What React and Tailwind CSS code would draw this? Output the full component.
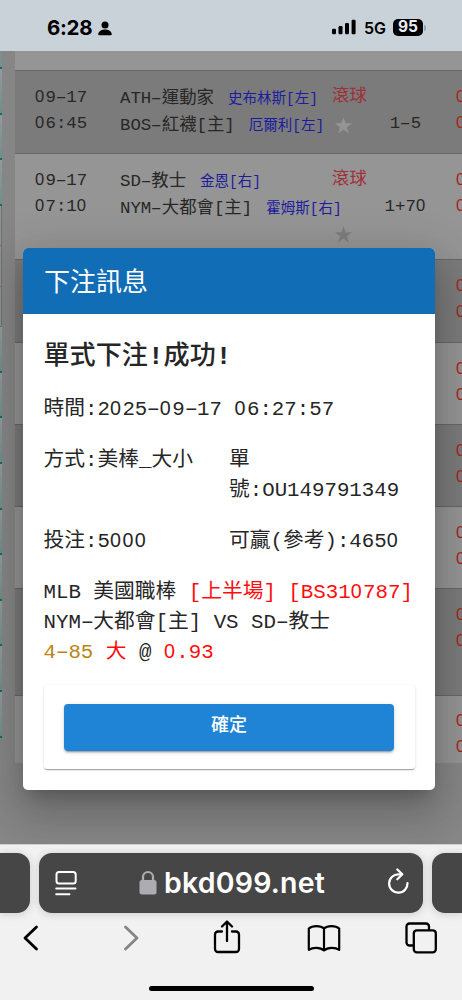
import React from 'react';
import clsx from 'clsx';

const ROWS = [
  {
    date: '09-17', time: '06:45', height: 'h-[83px]', shade: 'bg-[#7b7b7b]', star: 'mt-[7px] text-[#959595]',
    away: 'ATH-運動家', awayPitcher: '史布林斯[左]', home: 'BOS-紅襪[主]', homePitcher: '厄爾利[左]', line: '1-5',
  },
  {
    date: '09-17', time: '07:10', height: 'h-[106px]', shade: 'bg-[#959595]', star: 'mt-[33px] text-[#7d7d7d]',
    away: 'SD-教士', awayPitcher: '金恩[右]', home: 'NYM-大都會[主]', homePitcher: '霍姆斯[右]', line: '1+70',
  },
  { height: 'h-[83px]', shade: 'bg-[#7b7b7b]' },
  { height: 'h-[82px]', shade: 'bg-[#959595]' },
  { height: 'h-[82px]', shade: 'bg-[#7b7b7b]' },
  { height: 'h-[82px]', shade: 'bg-[#959595]' },
  { height: 'h-[107px]', shade: 'bg-[#7b7b7b]' },
];

// Plain zeros and wide dashes for the monospace face
const Mono = ({ children }) =>
  String(children).split(/([0-])/).map((part, i) => {
    if (part === '0') {
      return <span key={i} className="font-['Liberation_Sans'] text-[0.95em] leading-[0] tracking-[0.076em]">0</span>;
    }
    if (part === '-') {
      return <span key={i} className="inline-block scale-x-[1.7] leading-[0]">-</span>;
    }
    return part;
  });

const Star = ({ className }) => (
  <svg viewBox="0 0 24 24" className={clsx('ml-[2px] size-[19px]', className)} fill="currentColor">
    <path d="M12 1.5l2.7 7.7h8.1l-6.5 4.9 2.4 7.9-6.7-4.8L5.3 22l2.4-7.9L1.2 9.2h8.1z" />
  </svg>
);

const Odds = () => (
  <div className="ml-auto w-[6px] overflow-hidden pt-px text-[#a8261a]">
    <div><Mono>0</Mono></div>
    <div><Mono>0</Mono></div>
  </div>
);

const GameRow = ({ row }) => (
  <div className={clsx('flex shrink-0 border-b border-[#676767] pt-[12.5px] leading-[26.4px]', row.height, row.shade)}>
    {row.date && (
      <>
        <div className="ml-5 w-[85px] shrink-0 pt-px">
          <div><Mono>{row.date}</Mono></div>
          <div><Mono>{row.time}</Mono></div>
        </div>
        <div className="w-[212px] shrink-0 pt-px leading-[27.4px] whitespace-nowrap">
          <div>
            <Mono>{row.away}</Mono>
            <span className="ml-[14px] text-[14.5px] leading-[0] text-[#1c1c9c]">{row.awayPitcher}</span>
          </div>
          <div>
            <Mono>{row.home}</Mono>
            <span className="ml-[14px] text-[14.5px] leading-[0] text-[#1c1c9c]">{row.homePitcher}</span>
          </div>
        </div>
        <div className="w-[37px] shrink-0 pt-[1.5px]">
          <div className="h-[24px] leading-[24px] text-[#9f3038]">滾球</div>
          <Star className={row.star} />
        </div>
        <div className="w-[73px] shrink-0 pt-[27px] text-center"><Mono>{row.line}</Mono></div>
      </>
    )}
    <Odds />
  </div>
);

const SideStrip = () => (
  <div className="flex w-[2px] shrink-0 flex-col">
    <div className="h-[18px] shrink-0 border-b-2 border-[#146a6a] bg-[#789090]" />
    {[1, 2, 3].map(i => (
      <div key={i} className="h-[45.6px] shrink-0 border-b-2 border-[#146a6a] bg-gradient-to-b from-[#929a9a] to-[#6d9088]" />
    ))}
    {[1, 2, 3].map(i => (
      <div key={i} className="h-[40.5px] shrink-0 border-r border-b border-[#687474] bg-[#929292]" />
    ))}
    {[1, 2, 3, 4, 5, 6, 7, 8, 9].map(i => (
      <div key={i} className="h-[45.6px] shrink-0 border-b-2 border-[#146a6a] bg-gradient-to-b from-[#929a9a] to-[#6d9088]" />
    ))}
  </div>
);

const StatusBar = () => (
  <div className="flex h-[51px] shrink-0 items-center bg-[#c9d1d9] pt-[5px] pl-[47px] text-black">
    <span className="w-[45px] font-[Inter] text-[20.5px] font-bold tracking-[-0.3px]">6:28</span>
    <svg viewBox="0 0 14 15" className="ml-[6px] h-[15px] w-[14px]" fill="currentColor">
      <circle cx="7" cy="4" r="3.5" />
      <path d="M.2 13c.6-3 3-4.6 6.8-4.6s6.200 1.600 6.800 4.600c.1.700-.300 1.200-1 1.200H1.200c-.700 0-1.100-.500-1-1.200z" />
    </svg>
    <svg viewBox="0 0 24 16" className="ml-[220px] h-[16px] w-[24px] -translate-y-px" fill="currentColor">
      <rect x="0" y="9.800" width="4" height="5.500" rx="1.200" />
      <rect x="6.500" y="7" width="4" height="8.300" rx="1.200" />
      <rect x="13" y="4" width="4" height="11.300" rx="1.200" />
      <rect x="19.600" y="0.800" width="4" height="14.500" rx="1.200" />
    </svg>
    <span className="ml-[8px] w-[22px] font-[Inter] text-[16px] font-semibold">5G</span>
    <span className="ml-[7px] flex h-[17px] w-[30px] -translate-y-px items-center justify-center rounded-[5px] bg-black font-[Inter] text-[15.5px] font-bold text-[#e8eef3]">95</span>
    <span className="ml-px h-[6px] w-[2px] rounded-r bg-[#9aa1a8]" />
  </div>
);

const BetDialog = () => (
  <div className="absolute top-[248px] left-[23px] h-[542px] w-[412px] overflow-hidden rounded-[5px] bg-white text-[20.75px] leading-[30px] text-[#262626]">
    <div className="h-[65.5px] bg-[#116db6] px-[21px] pt-[4px] text-[26px] leading-[65px] text-white">下注訊息</div>
    <div className="px-[20.500px] pt-[27.5px]">
      <h2 className="h-[54px] text-[26.1px] leading-[32px] font-medium">
        單式下注<span className="font-bold">!</span>成功<span className="font-bold">!</span>
      </h2>
      <p><Mono>時間:2025-09-17 06:27:57</Mono></p>
      <div className="mt-[21px] grid grid-cols-2 gap-y-[21px] whitespace-nowrap">
        <div>方式:美棒_大小</div>
        <div>單<br /><Mono>號:OU149791349</Mono></div>
        <div><Mono>投注:5000</Mono></div>
        <div><Mono>可贏(參考):4650</Mono></div>
      </div>
      <div className="mt-[21px] whitespace-nowrap">
        <div>MLB 美國職棒 <span className="text-[#ff0d0d]"><Mono>[上半場] [BS310787]</Mono></span></div>
        <div><Mono>NYM-大都會[主] VS SD-教士</Mono></div>
        <div>
          <span className="text-[#b98612]"><Mono>4-85</Mono></span> <span className="text-[#ff0d0d]">大</span> @ <span className="text-[#ff0d0d]"><Mono>0.93</Mono></span>
        </div>
      </div>
      <div className="mt-[16.5px] rounded-[3px] px-[20.5px] pt-[19px] pb-[18px] shadow-[0_2px_1px_-1px_rgba(0,0,0,.2),0_1px_1px_rgba(0,0,0,.14),0_1px_3px_rgba(0,0,0,.12)]">
        <button className="block h-[47px] w-full rounded-[4px] bg-[#2084d6] pb-[2px] text-[18px] leading-[45px] font-medium text-white shadow-[0_3px_1px_-2px_rgba(0,0,0,.2),0_2px_2px_rgba(0,0,0,.14),0_1px_5px_rgba(0,0,0,.12)]">
          確定
        </button>
      </div>
    </div>
  </div>
);

const BrowserBar = () => (
  <div className="relative flex h-[156px] shrink-0 flex-col border-t border-[#d0d0d0] bg-[#f1f1f1] pt-[8px]">
    <div className="flex h-[59.500px] gap-[9px]">
      <div className="w-[30px] rounded-r-[13px] bg-[#464646] shadow-[0_1px_8px_rgba(0,0,0,.16)]" />
      <div className="flex w-[384px] items-center rounded-[13px] bg-[#464646] text-white shadow-[0_1px_8px_rgba(0,0,0,.16)]">
        <svg viewBox="0 0 22 26" className="ml-[16px] h-[26px] w-[22px]" fill="none" stroke="currentColor" strokeWidth="2" strokeLinecap="round">
          <rect x="1.500" y="2" width="19.200" height="11.500" rx="2.500" />
          <path d="M1.200 18.500h19.300M1.200 24.200h13.300" />
        </svg>
        <svg viewBox="0 0 18 25" className="ml-[62px] h-[25px] w-[18px] text-[#aeacb3]" fill="currentColor">
          <rect x="0.500" y="10" width="17" height="14.500" rx="2.500" />
          <path d="M4 11V7a5 5 0 0 1 10 0v4" fill="none" stroke="currentColor" strokeWidth="2.200" />
        </svg>
        <span className="ml-[7px] w-[163px] pt-[2px] font-[Inter] text-[28.5px] font-semibold tracking-[0.2px]">bkd099.net</span>
        <svg viewBox="0 0 22 26" className="ml-[60px] h-[26px] w-[22px] -translate-y-[2px]" fill="none" stroke="currentColor" strokeWidth="2.200" strokeLinecap="round" strokeLinejoin="round">
          <path d="M14.800 6.300H11.500A9.200 9.200 0 1 0 20.500 15" />
          <path d="M10.300 1.500l5 4.800-5 5" />
        </svg>
      </div>
      <div className="w-[30px] rounded-l-[13px] bg-[#464646] shadow-[0_1px_8px_rgba(0,0,0,.16)]" />
    </div>
    <div className="mt-[5px] flex h-[40px] items-center text-black">
      <svg viewBox="0 0 16 26" className="ml-[23px] h-[26px] w-[16px]" fill="none" stroke="currentColor" strokeWidth="2.800" strokeLinecap="round" strokeLinejoin="round">
        <path d="M13.500 2L2 13l11.500 11" />
      </svg>
      <svg viewBox="0 0 16 26" className="ml-[84px] h-[26px] w-[16px] text-[#858585]" fill="none" stroke="currentColor" strokeWidth="2.800" strokeLinecap="round" strokeLinejoin="round">
        <path d="M2.500 2L14 13 2.500 24" />
      </svg>
      <svg viewBox="0 0 28 34" className="ml-[74px] h-[34px] w-[28px] -translate-y-px" fill="none" stroke="currentColor" strokeWidth="2.300" strokeLinecap="round" strokeLinejoin="round">
        <path d="M9 11.500H5a3 3 0 0 0-3 3V29a3 3 0 0 0 3 3h18a3 3 0 0 0 3-3V14.500a3 3 0 0 0-3-3h-4" />
        <path d="M14 21V1.700M9 6.500l5-5 5 5" />
      </svg>
      <svg viewBox="0 0 34 28" className="ml-[66px] h-[28px] w-[34px]" fill="none" stroke="currentColor" strokeWidth="2.200" strokeLinejoin="round" strokeLinecap="round">
        <path d="M17 4.500C13.500 1.300 5.500 1.300 1.800 4.500v21.300c4-2.800 11.500-2.800 15.200.700 3.700-3.500 11.200-3.500 15.200-.700V4.500C28.500 1.300 20.500 1.300 17 4.500zM17 4.500v22" />
      </svg>
      <svg viewBox="0 0 32 32" className="ml-[64px] size-[32px]" fill="none" stroke="currentColor" strokeWidth="2.300" strokeLinejoin="round">
        <path d="M8.500 23.500H4.500a3 3 0 0 1-3-3v-16a3 3 0 0 1 3-3h16.500a3 3 0 0 1 3 3v3.500" />
        <rect x="8.800" y="8.300" width="22" height="22" rx="3" />
      </svg>
    </div>
    <div className="mx-auto mt-[28px] h-[5px] w-[165px] rounded-full bg-black" />
  </div>
);

export default function App() {
  return (
    <div className="relative flex h-[1000px] w-[462px] flex-col overflow-hidden bg-[#868686] font-['Liberation_Mono','Noto_Sans_CJK_TC',monospace] text-[17.4px] text-[#272727]">
      <StatusBar />
      <div className="flex h-[793px] shrink-0 overflow-hidden">
        <SideStrip />
        <div className="ml-[13px] flex flex-1 flex-col">
          <div className="h-[20px] shrink-0 border-b border-[#676767] bg-[#959595]" />
          {ROWS.map((row, i) => <GameRow key={i} row={row} />)}
          <div className="flex h-[67px] shrink-0 bg-[#959595] pt-[12px] leading-[26.400px]"><Odds /></div>
        </div>
      </div>
      {/* dialog shadow stays inside the page area, under the system bars */}
      <div className="absolute top-[51px] left-0 h-[793px] w-full overflow-hidden">
        <div className="mt-[197px] ml-[23px] h-[542px] w-[412px] rounded-[5px] shadow-[0_11px_15px_-7px_rgba(0,0,0,.2),0_24px_38px_3px_rgba(0,0,0,.14),0_9px_46px_8px_rgba(0,0,0,.12)]" />
      </div>
      <BetDialog />
      <BrowserBar />
    </div>
  );
}
